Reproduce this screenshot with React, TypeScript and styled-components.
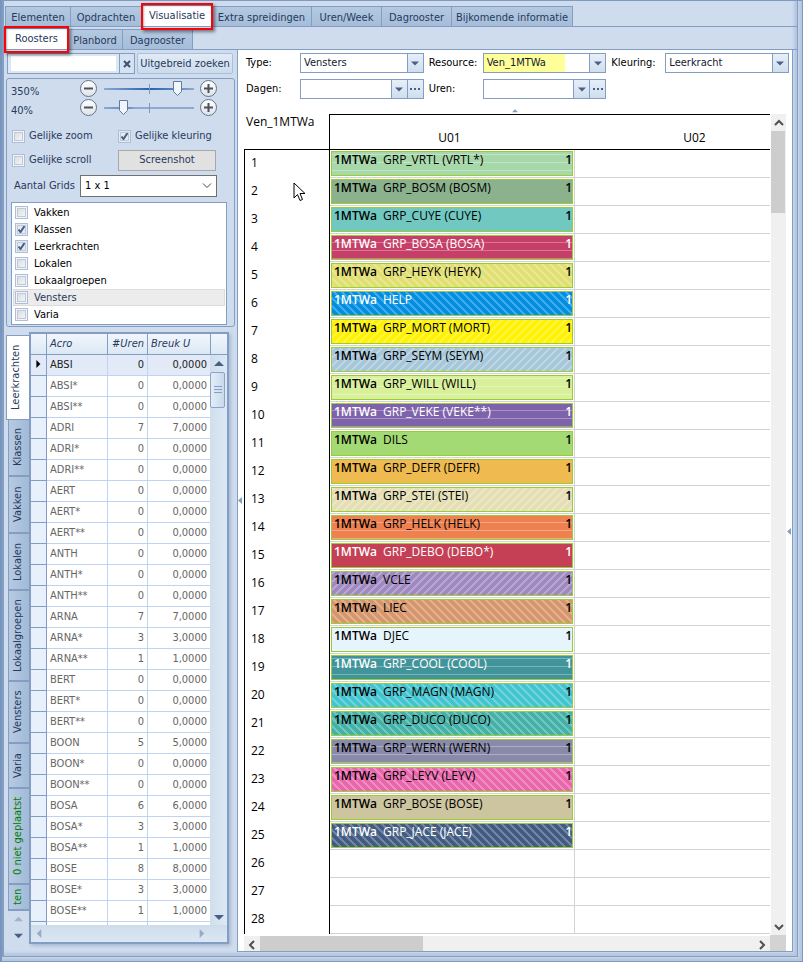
import React, { useState } from "react";
import styled, { createGlobalStyle, css } from "styled-components";

const steel = "#839dc3";
const ink = "#27395c";
const uiFont = `"DejaVu Sans Condensed", "Noto Sans", sans-serif`;
const gridFont = `"Open Sans", "Noto Sans", sans-serif`;

const Global = createGlobalStyle`
  *, *::before, *::after { box-sizing: border-box; }
  body { margin: 0; background: #cfdced; font: 11px/16px ${uiFont}; color: ${ink}; }
  button, input, select, table { font: inherit; color: inherit; }
  button { padding: 0; margin: 0; cursor: default; }
`;

/* ---------- window frame ---------- */

const Shell = styled.div`
  height: 100vh;
  min-height: 600px;
  display: flex;
  flex-direction: column;
  overflow: hidden;
  background: #cfdced;
  border: 1px solid #7f9ac0;
  border-left: 2px solid #7896bd;
  padding: 0 4px 4px 0;
  box-shadow: inset -4px -4px 3px -1px #b4c6df;
`;

const Frame = styled.div`
  flex: 1;
  min-height: 0;
  display: flex;
  flex-direction: column;
  border: solid ${steel};
  border-width: 0 1px 1px 2px;
  padding: 0 4px 4px 0;
  box-shadow: inset -4px -4px 3px -1px #b4c6df;
  background: #cfdced;
`;

const TabBar = styled.div<{ $sub?: boolean }>`
  display: flex;
  align-items: flex-end;
  height: ${(p) => (p.$sub ? 23 : 26)}px;
  padding-left: 1px;
  margin-right: -4px;
  border-bottom: 1px solid ${steel};
`;

const TabButton = styled.button<{ $w: number; $active?: boolean }>`
  position: relative;
  width: ${(p) => p.$w}px;
  height: ${(p) => (p.$active ? 21 : 20)}px;
  flex: none;
  padding-top: ${(p) => (p.$active ? 0 : 2)}px;
  border: 1px solid ${steel};
  border-left-width: ${(p) => (p.$active ? 1 : 0)}px;
  border-bottom: 0;
  background: ${(p) => (p.$active ? "#fff" : "linear-gradient(#b4c9e1, #a5bdd9)")};
  white-space: nowrap;
  &:first-child { border-left-width: 1px; }
`;

const Marker = styled.span`
  position: absolute;
  inset: -3px -2px -4px -2px;
  z-index: 3;
  border: 2px solid #fb0207;
  box-shadow: 2px 2px 3px rgba(0, 0, 0, 0.45), inset 1px 1px 2px rgba(0, 0, 0, 0.3);
  pointer-events: none;
`;

const Main = styled.div`
  flex: 1;
  min-height: 0;
  display: flex;
`;

/* ---------- left side ---------- */

const Side = styled.aside`
  width: 233px;
  flex: none;
  display: flex;
  flex-direction: column;
  padding: 3px 2px 8px 2px;
`;

const SearchRow = styled.div`
  display: flex;
  height: 21px;
  margin: 0 2px 4px 1px;
`;

const SearchBox = styled.div`
  width: 128px;
  display: flex;
  border: 1px solid ${steel};
  background: #dce7f4;
  padding: 2px 0 2px 3px;
`;

const SearchInput = styled.input`
  width: 105px;
  border: 0;
  background: #fff;
  outline: 0;
`;

const ClearButton = styled.button`
  flex: 1;
  margin: -2px 0 -2px 3px;
  border: 0;
  border-left: 1px solid ${steel};
  background: #d5e2f1;
  display: grid;
  place-items: center;
`;

const SoftButton = styled.button`
  flex: 1;
  margin-left: 2px;
  border: 1px solid #a9c0db;
  border-radius: 2px;
  background: linear-gradient(#e2ebf6, #cbdaec);
  white-space: nowrap;
`;

const Options = styled.section`
  border: 1px solid ${steel};
  border-radius: 3px;
  padding: 0 7px 2px 4px;
  height: 249px;
  margin-bottom: 5px;
`;

const ZoomRow = styled.div`
  display: grid;
  grid-template-columns: 67px 18px 98px 18px;
  align-items: center;
  column-gap: 2px;
  height: 19px;
`;

const ZoomLabel = styled.label`
  padding-top: 6px;
  line-height: 12px;
`;

const RoundButton = styled.button`
  width: 17px;
  height: 17px;
  border: 1px solid #66738a;
  border-radius: 50%;
  background: linear-gradient(#fff, #dfe3e8);
  display: grid;
  place-items: center;
`;

const thumb = `url("data:image/svg+xml,%3Csvg xmlns='http://www.w3.org/2000/svg' width='9' height='15'%3E%3Cpath d='M.5.5h8v10l-4 4-4-4z' fill='%23f2f6fb' stroke='%235f7ba3'/%3E%3C/svg%3E")`;

const Slider = styled.input<{ $strong?: boolean }>`
  appearance: none;
  width: 90px;
  height: 17px;
  margin: 0 4px;
  background:
    linear-gradient(#7f98bd, #7f98bd) 45px 4px / 1px 10px no-repeat,
    linear-gradient(90deg, #8ea9cd, ${(p) => (p.$strong ? "#2a62b0 50%, #5d88c2 80%" : "#5d88c2 25%, #8ea9cd 35%")}, #8ea9cd) 0 8px / 90px 2px no-repeat;
  &::-webkit-slider-thumb {
    appearance: none;
    width: 9px;
    height: 15px;
    background: ${thumb};
  }
`;

const CheckGrid = styled.div`
  display: grid;
  grid-template-columns: 106px 1fr;
  align-items: center;
  row-gap: 2px;
  margin: 8px 4px 4px 1px;
`;

const CheckLabel = styled.label`
  display: flex;
  align-items: center;
  height: 22px;
  white-space: nowrap;
`;

const tick = `url("data:image/svg+xml,%3Csvg xmlns='http://www.w3.org/2000/svg' width='9' height='9'%3E%3Cpath d='M1.5 4.5l2 2.5 4-6' fill='none' stroke='%23405f8e' stroke-width='2'/%3E%3C/svg%3E")`;

const Check = styled.input`
  appearance: none;
  width: 13px;
  height: 13px;
  margin: 0 4px 0 0;
  flex: none;
  border: 1px solid #aabfdb;
  outline: 1px solid #c3c9d2;
  outline-offset: -3px;
  background: linear-gradient(135deg, #d8dbe0, #f6f7f8) 1px 1px / 9px 9px no-repeat #f2f6fb;
  &:checked { background: ${tick} 1px 1px no-repeat, #e6ebf2; }
`;

const GreyButton = styled.button`
  width: 98px;
  height: 21px;
  border: 1px solid #a6a8ab;
  background: #e1e1e1;
`;

const GridsRow = styled.label`
  display: grid;
  grid-template-columns: 66px 137px;
  align-items: center;
  margin-left: 3px;
`;

const PlainSelect = styled.select`
  appearance: none;
  height: 22px;
  padding: 0 4px;
  border: 1px solid #707070;
  border-radius: 0;
  color: #000;
  background: url("data:image/svg+xml,%3Csvg xmlns='http://www.w3.org/2000/svg' width='10' height='6'%3E%3Cpath d='M1 .5l4 4 4-4' fill='none' stroke='%23444'/%3E%3C/svg%3E") right 4px center no-repeat #fff;
`;

const CheckList = styled.ul`
  list-style: none;
  margin: 5px 0 0;
  padding: 1px;
  width: 216px;
  border: 1px solid ${steel};
  background: #fff;
`;

const CheckItem = styled.li<{ $hot?: boolean }>`
  height: 17px;
  color: ${(p) => (p.$hot ? ink : "#000")};
  background: ${(p) => (p.$hot ? "#ececec" : "transparent")};
  box-shadow: ${(p) => (p.$hot ? "inset 0 0 0 1px #dcdcdc" : "none")};
  label { display: flex; align-items: center; height: 17px; padding-left: 2px; }
  input { margin-right: 6px; }
`;

const Lower = styled.div`
  flex: 1;
  min-height: 0;
  display: flex;
`;

const VTabs = styled.div`
  width: 23px;
  flex: none;
  display: flex;
  flex-direction: column;
  align-items: flex-end;
  padding-top: 3px;
`;

const VTabClip = styled.div`
  flex: 1;
  min-height: 0;
  overflow: hidden;
  display: flex;
  flex-direction: column;
  align-items: flex-end;
`;

const VTab = styled.button<{ $h: number; $active?: boolean; $green?: boolean }>`
  flex: none;
  width: ${(p) => (p.$active ? 23 : 21)}px;
  height: ${(p) => p.$h}px;
  padding-left: ${(p) => (p.$active ? 4 : 2)}px;
  writing-mode: vertical-rl;
  transform: rotate(180deg);
  white-space: nowrap;
  color: ${(p) => (p.$green ? "#008000" : ink)};
  border: 1px solid ${steel};
  border-top-width: ${(p) => (p.$active ? 1 : 2)}px;
  border-bottom-width: ${(p) => (p.$active ? 1 : 0)}px;
  border-left: 0;
  background: ${(p) => (p.$active ? "#fff" : "linear-gradient(90deg, #a2bad7, #b6cae2)")};
`;

const VScroll = styled.div`
  height: 33px;
  display: flex;
  flex-direction: column;
  justify-content: space-around;
  width: 22px;
`;

const BareButton = styled.button`
  border: 0;
  background: transparent;
  display: grid;
  place-items: center;
  min-width: 0;
`;

const ListFrame = styled.div`
  flex: none;
  width: 200px;
  display: grid;
  grid-template: 1fr 17px / 1fr 17px;
  border: 2px solid ${steel};
  background: #d3e0f0;
  box-shadow: 2px 2px 3px #a9bcd6;
`;

const ListClip = styled.div`
  overflow: hidden;
  min-height: 0;
  background: #fff;
`;

const ListTable = styled.table`
  width: 100%;
  table-layout: fixed;
  border-collapse: separate;
  border-spacing: 0;
  color: #666;
  th, td {
    height: 21px;
    padding: 0 3px;
    border-right: 1px solid #bfd4f0;
    border-bottom: 1px solid #bfd4f0;
    text-align: left;
    line-height: 16px;
    white-space: nowrap;
  }
  th {
    font-weight: normal;
    font-style: italic;
    color: ${ink};
    background: linear-gradient(#f1f6fc, #dce8f5);
    border-color: ${steel};
  }
  td:first-child { background: #e8f1fb; border-color: ${steel}; }
  td:nth-child(n + 3) { text-align: right; }
  th:nth-child(3) { text-align: right; }
  tr[aria-selected="true"] td { background: #e1eaf6; color: #222; }
  td:last-child, th:last-child { border-right: 0; }
`;

const ListRail = styled.div`
  display: flex;
  flex-direction: column;
  min-height: 0;
  background: linear-gradient(90deg, #d0deed, #dce8f4);
`;

const RailButton = styled(BareButton)`
  flex: none;
  height: 17px;
`;

const RailHead = styled.div`
  height: 21px;
  flex: none;
  border-left: 1px solid ${steel};
  border-bottom: 1px solid ${steel};
  background: linear-gradient(#f1f6fc, #dce8f5);
`;

const RailThumb = styled.div`
  height: 36px;
  width: 15px;
  border: 1px solid #8aa4c8;
  border-radius: 2px;
  background: linear-gradient(90deg, #e3edf8, #c9d9ec);
  display: grid;
  place-items: center;
`;

const Grow = styled.div`
  flex: 1;
`;

const ListFoot = styled.div`
  grid-column: 1 / -1;
  display: flex;
  justify-content: space-between;
  padding: 0 21px 0 4px;
  background: linear-gradient(#cddcec, #dce7f3);
`;

/* ---------- right side ---------- */

const Work = styled.main`
  position: relative;
  flex: 1;
  min-width: 0;
  display: flex;
  flex-direction: column;
  border-left: 1px solid ${steel};
  border-right: 1px solid ${steel};
  border-bottom: 1px solid ${steel};
  background: #fff;
  color: #000;
`;

const Filters = styled.div`
  display: grid;
  grid-template-columns: 54px 1fr 59px 1fr 59px 1fr;
  row-gap: 6px;
  padding: 3px 3px 0 8px;
  align-items: center;
`;

const FilterLabel = styled.label<{ $gap?: boolean }>`
  padding-left: ${(p) => (p.$gap ? 5 : 0)}px;
`;

const Combo = styled.div`
  display: flex;
  height: 20px;
  border: 1px solid ${steel};
  background: #fff;
  min-width: 0;
`;

const ComboSelect = styled.select<{ $mark?: boolean }>`
  appearance: none;
  flex: 1;
  min-width: 0;
  border: 0;
  border-radius: 0;
  outline: 0;
  padding: 0 3px;
  color: #111a33;
  background: ${(p) => (p.$mark ? "linear-gradient(#ffff99, #ffff99) 0 0 / 81px 100% no-repeat #fff" : "#fff")};
`;

const ComboButton = styled.button`
  width: 16px;
  flex: none;
  border: 0;
  border-left: 1px solid ${steel};
  background: linear-gradient(#e6eff9, #cfdeee);
  display: grid;
  place-items: center;
`;

const Collapse = styled.div`
  height: 15px;
  display: grid;
  place-items: end center;
`;

const Scroller = styled.div`
  flex: 1;
  min-height: 0;
  margin: 0 6px 0 6px;
  display: grid;
  grid-template: 1fr 16px / 1fr 16px;
`;

const SheetClip = styled.div`
  overflow: hidden;
  min-width: 0;
  min-height: 0;
`;

const Sheet = styled.table`
  width: 576px;
  table-layout: fixed;
  border-collapse: separate;
  border-spacing: 0;
  font: 12px/16px ${gridFont};
  th, td { padding: 0; }
`;

const Corner = styled.th`
  height: 36px;
  border-bottom: 1px solid #000;
  border-right: 1px solid #000;
  font-weight: normal;
  text-align: left;
  vertical-align: top;
  && { padding-left: 2px; }
`;

const ColHead = styled.th`
  border-top: 1px solid #000;
  border-bottom: 1px solid #000;
  font-weight: normal;
  vertical-align: bottom;
  && { padding: 0 6px 3px 0; }
`;

const HourHead = styled.th`
  height: 28px;
  border-left: 1px solid #000;
  border-right: 1px solid #000;
  font-weight: normal;
  text-align: left;
  && { padding: 0 6px 2px; }
`;

const Slot = styled.td`
  border-right: 1px solid #d3d3d3;
  border-bottom: 1px solid #d3d3d3;
  && { padding: 1px; }
`;

type Pattern = "solid" | "lines" | "back" | "fwd";

const stripes = (dir: string) => css`
  background-image: linear-gradient(${dir}, rgba(255, 255, 255, 0.25) 19%, transparent 19% 50%, rgba(255, 255, 255, 0.25) 50% 69%, transparent 69%);
  background-size: 8px 8px;
`;

const Lesson = styled.div<{ $bg: string; $pattern: Pattern; $odd: boolean; $light?: boolean }>`
  display: flex;
  height: 25px;
  padding: 0 0 0 2px;
  line-height: 16px;
  border: 1px solid #9acd32;
  color: ${(p) => (p.$light ? "#fff" : "#000")};
  background-color: ${(p) => p.$bg};
  white-space: nowrap;
  ${(p) =>
    p.$pattern === "lines" &&
    css`
      background-image: linear-gradient(rgba(255, 255, 255, 0.3) 1px, transparent 1px);
      background-size: 8px 8px;
      background-position: 0 ${p.$odd ? 6 : 2}px;
    `}
  ${(p) => p.$pattern === "back" && stripes("45deg")}
  ${(p) => p.$pattern === "fwd" && stripes("135deg")}
`;

const ClassName = styled.b`
  width: 49px;
  font-weight: 600;
`;

const Group = styled.span`
  flex: 1;
`;

const Count = styled.b`
  font-weight: 600;
`;

const WinBar = styled.div<{ $dir: "row" | "column" }>`
  display: flex;
  flex-direction: ${(p) => p.$dir};
  background: #f0f0f0;
  margin: ${(p) => (p.$dir === "row" ? "1px 0 0" : "0 0 0 1px")};
`;

const WinArrow = styled(BareButton)`
  flex: none;
  width: 16px;
  height: 17px;
`;

const WinThumb = styled.div<{ $len: number; $dir: "row" | "column" }>`
  flex: none;
  background: #cdcdcd;
  ${(p) => (p.$dir === "row" ? `width: ${p.$len}%;` : `height: ${p.$len}%; width: 14px;`)}
`;

const SizeCorner = styled.div`
  background: #d3d3d3;
`;

const Pointer = styled.svg`
  position: absolute;
  left: 55px;
  top: 132px;
`;

const SplitLeft = styled.svg`
  position: absolute;
  left: 0;
  top: calc(50% - 4px);
`;

const SplitRight = styled.svg`
  position: absolute;
  right: 1px;
  top: 53%;
`;

/* ---------- data ---------- */

const tabs: [string, number][] = [
  ["Elementen", 66], ["Opdrachten", 71], ["Visualisatie", 70], ["Extra spreidingen", 100],
  ["Uren/Week", 70], ["Dagrooster", 70], ["Bijkomende informatie", 121],
];
const subTabs: [string, number][] = [["Roosters", 63], ["Planbord", 55], ["Dagrooster", 70]];

const vtabs: [string, number][] = [
  ["Leerkrachten", 85], ["Klassen", 57], ["Vakken", 57], ["Lokalen", 57], ["Lokaalgroepen", 91],
  ["Vensters", 62], ["Varia", 45], ["0 niet geplaatst", 96], ["ten", 26],
];

const filters: [string, boolean][] = [
  ["Vakken", false], ["Klassen", true], ["Leerkrachten", true], ["Lokalen", false],
  ["Lokaalgroepen", false], ["Vensters", false], ["Varia", false],
];

const teachers: [string, number][] = [
  ["ABSI", 0], ["ABSI*", 0], ["ABSI**", 0], ["ADRI", 7], ["ADRI*", 0], ["ADRI**", 0],
  ["AERT", 0], ["AERT*", 0], ["AERT**", 0], ["ANTH", 0], ["ANTH*", 0], ["ANTH**", 0],
  ["ARNA", 7], ["ARNA*", 3], ["ARNA**", 1], ["BERT", 0], ["BERT*", 0], ["BERT**", 0],
  ["BOON", 5], ["BOON*", 0], ["BOON**", 0], ["BOSA", 6], ["BOSA*", 3], ["BOSA**", 1],
  ["BOSE", 8], ["BOSE*", 3], ["BOSE**", 1],
];

const lessons: [string, string, Pattern, boolean?][] = [
  ["GRP_VRTL (VRTL*)", "#a7d8aa", "lines"],
  ["GRP_BOSM (BOSM)", "#8bb28c", "solid"],
  ["GRP_CUYE (CUYE)", "#71c8c1", "solid"],
  ["GRP_BOSA (BOSA)", "#c63f69", "lines", true],
  ["GRP_HEYK (HEYK)", "#e0df70", "back"],
  ["HELP", "#008fe0", "back", true],
  ["GRP_MORT (MORT)", "#fff200", "fwd"],
  ["GRP_SEYM (SEYM)", "#a6c7d9", "fwd"],
  ["GRP_WILL (WILL)", "#d8f09a", "lines"],
  ["GRP_VEKE (VEKE**)", "#7e62aa", "lines", true],
  ["DILS", "#a4da73", "solid"],
  ["GRP_DEFR (DEFR)", "#efbb50", "solid"],
  ["GRP_STEI (STEI)", "#e3deb3", "fwd"],
  ["GRP_HELK (HELK)", "#ee814f", "lines"],
  ["GRP_DEBO (DEBO*)", "#c53f55", "solid", true],
  ["VCLE", "#9f88bf", "fwd"],
  ["LIEC", "#d6956a", "back"],
  ["DJEC", "#e6f4fc", "solid"],
  ["GRP_COOL (COOL)", "#41949a", "lines", true],
  ["GRP_MAGN (MAGN)", "#40c4cf", "back"],
  ["GRP_DUCO (DUCO)", "#42b2a8", "back"],
  ["GRP_WERN (WERN)", "#8989a9", "lines"],
  ["GRP_LEYV (LEYV)", "#e966ac", "back"],
  ["GRP_BOSE (BOSE)", "#ccc59f", "solid"],
  ["GRP_JACE (JACE)", "#425b81", "back", true],
];

/* ---------- small drawings ---------- */

const Tri = ({ dir, color = "#4b5f86", size = 9 }: { dir: "up" | "down" | "left" | "right"; color?: string; size?: number }) => {
  const d = { up: "M0 7l5-5 5 5z", down: "M0 3l5 5 5-5z", left: "M7 0l-5 5 5 5z", right: "M3 0l5 5-5 5z" }[dir];
  return (
    <svg width={size} height={size} viewBox="0 0 10 10" aria-hidden="true">
      <path d={d} fill={color} />
    </svg>
  );
};

const Chevron = ({ d }: { d: string }) => (
  <svg width="10" height="10" viewBox="0 0 10 10" aria-hidden="true">
    <path d={d} fill="none" stroke="#505050" strokeWidth="2" />
  </svg>
);

const Sign = ({ plus }: { plus?: boolean }) => (
  <svg width="9" height="9" viewBox="0 0 9 9" aria-hidden="true">
    <path d={plus ? "M0 4.5h9M4.5 0v9" : "M0 4.5h9"} stroke="#4c5260" strokeWidth="2" />
  </svg>
);

/* ---------- composed parts ---------- */

const Zoom = ({ id, label, start, strong }: { id: string; label: string; start: number; strong?: boolean }) => {
  const [value, setValue] = useState(start);
  return (
    <ZoomRow>
      <ZoomLabel htmlFor={id}>{label}</ZoomLabel>
      <RoundButton type="button" aria-label="Kleiner" onClick={() => setValue(value - 5)}><Sign /></RoundButton>
      <Slider id={id} type="range" $strong={strong} value={value} onChange={(e) => setValue(+e.target.value)} />
      <RoundButton type="button" aria-label="Groter" onClick={() => setValue(value + 5)}><Sign plus /></RoundButton>
    </ZoomRow>
  );
};

const Filter = ({ id, label, value, dots, gap, mark }: { id: string; label: string; value: string; dots?: boolean; gap?: boolean; mark?: boolean }) => (
  <>
    <FilterLabel htmlFor={id} $gap={gap}>{label}</FilterLabel>
    <Combo>
      <ComboSelect id={id} $mark={mark} defaultValue={value}>
        <option>{value}</option>
      </ComboSelect>
      <ComboButton type="button" tabIndex={-1} aria-label={`${label} lijst`}><Tri dir="down" size={8} /></ComboButton>
      {dots && (
        <ComboButton type="button" aria-label={`${label} meer`}>
          <svg width="10" height="2" aria-hidden="true"><path d="M0 1h2M4 1h2M8 1h2" stroke="#4b5f86" strokeWidth="2" /></svg>
        </ComboButton>
      )}
    </Combo>
  </>
);

export default function App() {
  return (
    <>
      <Global />
      <Shell>
        <Frame>
          <TabBar>
            {tabs.map(([name, w]) => (
              <TabButton key={name} type="button" $w={w} $active={name === "Visualisatie"}>
                {name}
                {name === "Visualisatie" && <Marker />}
              </TabButton>
            ))}
          </TabBar>
          <TabBar $sub>
            {subTabs.map(([name, w]) => (
              <TabButton key={name} type="button" $w={w} $active={name === "Roosters"}>
                {name}
                {name === "Roosters" && <Marker />}
              </TabButton>
            ))}
          </TabBar>
          <Main>
            <Side>
              <SearchRow>
                <SearchBox>
                  <SearchInput aria-label="Zoeken" />
                  <ClearButton type="button" aria-label="Wissen">
                    <svg width="8" height="8" viewBox="0 0 8 8" aria-hidden="true"><path d="M1 1l6 6M7 1l-6 6" stroke="#3d5178" strokeWidth="2" /></svg>
                  </ClearButton>
                </SearchBox>
                <SoftButton type="button">Uitgebreid zoeken</SoftButton>
              </SearchRow>
              <Options>
                <Zoom id="zoom-x" label="350%" start={85} strong />
                <Zoom id="zoom-y" label="40%" start={19} />
                <CheckGrid>
                  <CheckLabel><Check type="checkbox" />Gelijke zoom</CheckLabel>
                  <CheckLabel><Check type="checkbox" defaultChecked />Gelijke kleuring</CheckLabel>
                  <CheckLabel><Check type="checkbox" />Gelijke scroll</CheckLabel>
                  <GreyButton type="button">Screenshot</GreyButton>
                </CheckGrid>
                <GridsRow>
                  Aantal Grids
                  <PlainSelect defaultValue="1 x 1"><option>1 x 1</option></PlainSelect>
                </GridsRow>
                <CheckList>
                  {filters.map(([name, on]) => (
                    <CheckItem key={name} $hot={name === "Vensters"}>
                      <label><Check type="checkbox" defaultChecked={on} />{name}</label>
                    </CheckItem>
                  ))}
                </CheckList>
              </Options>
              <Lower>
                <VTabs>
                  <VTabClip>
                    {vtabs.map(([name, h], i) => (
                      <VTab key={name} type="button" $h={h} $active={i === 0} $green={i > 6}>{name}</VTab>
                    ))}
                  </VTabClip>
                  <VScroll>
                    <BareButton type="button" aria-label="Omhoog"><Tri dir="up" color="#a3b2cb" /></BareButton>
                    <BareButton type="button" aria-label="Omlaag"><Tri dir="down" /></BareButton>
                  </VScroll>
                </VTabs>
                <ListFrame>
                  <ListClip>
                    <ListTable>
                      <colgroup>
                        <col width="16" /><col width="61" /><col width="40" /><col />
                      </colgroup>
                      <thead>
                        <tr><th aria-label="Selectie" /><th>Acro</th><th>#Uren</th><th>Breuk U</th></tr>
                      </thead>
                      <tbody>
                        {teachers.map(([name, n], i) => (
                          <tr key={name} aria-selected={i === 0}>
                            <td>{i === 0 && <Tri dir="right" color="#000" size={8} />}</td>
                            <td>{name}</td>
                            <td>{n}</td>
                            <td>{n},0000</td>
                          </tr>
                        ))}
                        <tr><td /><td /><td /><td /></tr>
                      </tbody>
                    </ListTable>
                  </ListClip>
                  <ListRail>
                    <RailHead />
                    <RailButton type="button" aria-label="Lijst omhoog"><Tri dir="up" size={10} /></RailButton>
                    <RailThumb>
                      <svg width="8" height="8" aria-hidden="true"><path d="M0 .5h8M0 3.5h8M0 6.5h8" stroke="#839dc3" /></svg>
                    </RailThumb>
                    <Grow />
                    <RailButton type="button" aria-label="Lijst omlaag"><Tri dir="down" size={10} /></RailButton>
                  </ListRail>
                  <ListFoot>
                    <BareButton type="button" aria-label="Lijst naar links"><Tri dir="left" color="#9aaac6" /></BareButton>
                    <BareButton type="button" aria-label="Lijst naar rechts"><Tri dir="right" color="#9aaac6" /></BareButton>
                  </ListFoot>
                </ListFrame>
              </Lower>
            </Side>
            <Work>
              <Filters>
                <Filter id="type" label="Type:" value="Vensters" />
                <Filter id="resource" label="Resource:" value="Ven_1MTWa" gap mark />
                <Filter id="kleuring" label="Kleuring:" value="Leerkracht" gap />
                <Filter id="dagen" label="Dagen:" value="" dots />
                <Filter id="uren" label="Uren:" value="" dots gap />
              </Filters>
              <Collapse><Tri dir="up" color="#839dc3" size={6} /></Collapse>
              <Scroller>
                <SheetClip>
                  <Sheet>
                    <colgroup><col width="86" /><col width="245" /><col width="245" /></colgroup>
                    <thead>
                      <tr><Corner scope="col">Ven_1MTWa</Corner><ColHead scope="col">U01</ColHead><ColHead scope="col">U02</ColHead></tr>
                    </thead>
                    <tbody>
                      {Array.from({ length: 28 }, (_, i) => {
                        const l = lessons[i];
                        return (
                          <tr key={i}>
                            <HourHead scope="row">{i + 1}</HourHead>
                            <Slot>
                              {l && (
                                <Lesson $bg={l[1]} $pattern={l[2]} $odd={i % 2 === 1} $light={l[3]}>
                                  <ClassName>1MTWa</ClassName>
                                  <Group>{l[0]}</Group>
                                  <Count>1</Count>
                                </Lesson>
                              )}
                            </Slot>
                            <Slot />
                          </tr>
                        );
                      })}
                    </tbody>
                  </Sheet>
                </SheetClip>
                <WinBar $dir="column">
                  <WinArrow type="button" aria-label="Omhoog"><Chevron d="M1 7l4-4 4 4" /></WinArrow>
                  <WinThumb $dir="column" $len={10} />
                  <Grow />
                  <WinArrow type="button" aria-label="Omlaag"><Chevron d="M1 3l4 4 4-4" /></WinArrow>
                </WinBar>
                <WinBar $dir="row">
                  <WinArrow type="button" aria-label="Links"><Chevron d="M7 1l-4 4 4 4" /></WinArrow>
                  <WinThumb $dir="row" $len={31} />
                  <Grow />
                  <WinArrow type="button" aria-label="Rechts"><Chevron d="M3 1l4 4-4 4" /></WinArrow>
                </WinBar>
                <SizeCorner />
              </Scroller>
              <Pointer width="13" height="20" viewBox="0 0 13 20" aria-hidden="true">
                <path d="M1 1v15l3.500-3.500 2.500 6 2.500-1-2.500-6h5z" fill="#fff" stroke="#000" />
              </Pointer>
              <SplitLeft width="4" height="7" viewBox="0 0 4 7" aria-hidden="true"><path d="M4 0v7l-4-3.500z" fill={steel} /></SplitLeft>
              <SplitRight width="4" height="7" viewBox="0 0 4 7" aria-hidden="true"><path d="M4 0v7l-4-3.500z" fill={steel} /></SplitRight>
            </Work>
          </Main>
        </Frame>
      </Shell>
    </>
  );
}
